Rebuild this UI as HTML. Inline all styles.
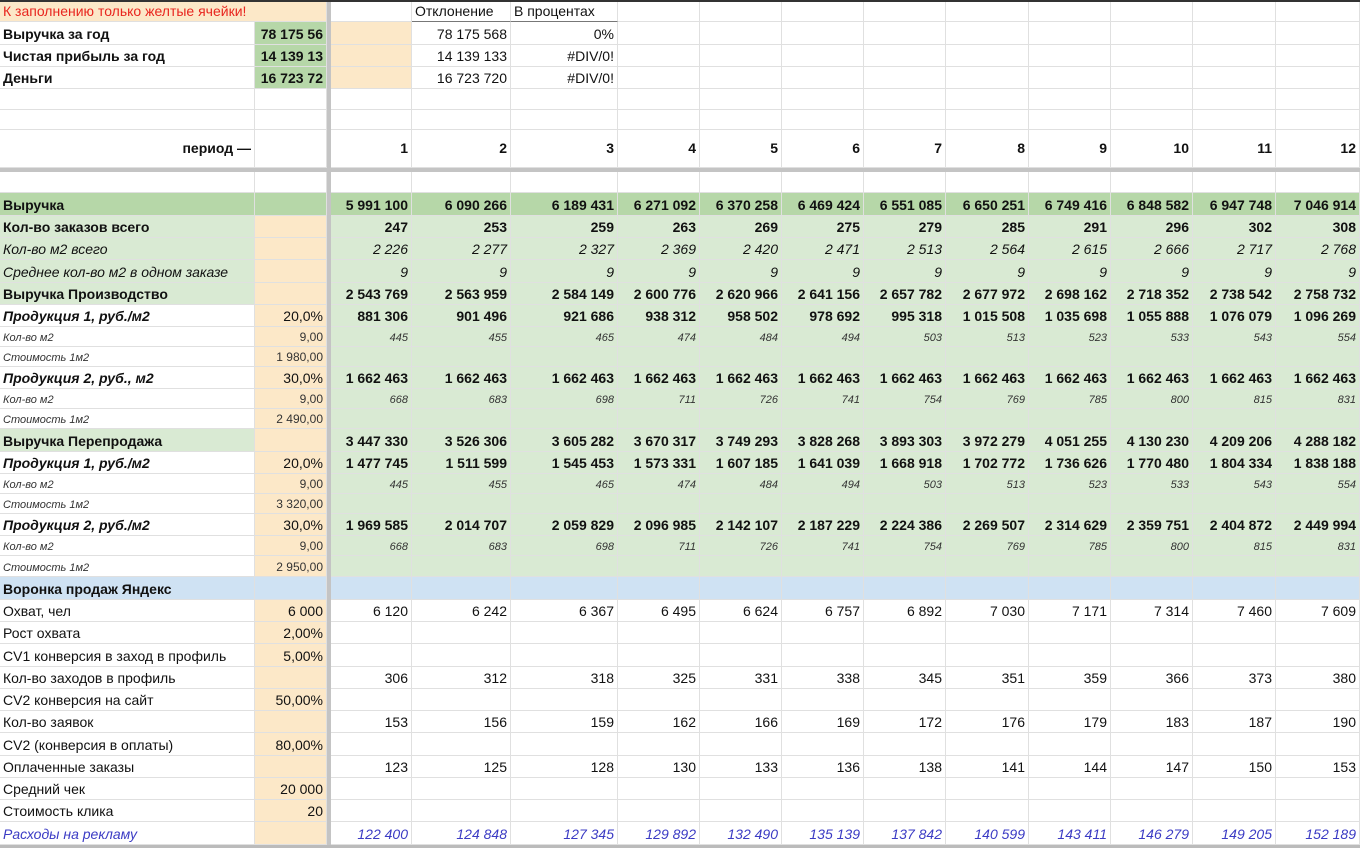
<!DOCTYPE html>
<html><head><meta charset="utf-8"><style>
body{margin:0;width:1360px;height:848px;overflow:hidden;background:#fff;font-family:"Liberation Sans",Arial,sans-serif;font-size:14px;color:#111}
.top{height:2px;background:#333}
.r{display:flex}
.r>span{box-sizing:border-box;border-right:1px solid #e0e0e0;border-bottom:1px solid #e0e0e0;padding:0 3px 2px 3px;white-space:nowrap;overflow:hidden;display:flex;align-items:flex-end;justify-content:flex-end;flex:none}
.r>span:nth-child(1){width:255px;justify-content:flex-start;overflow:visible}
.r>span:nth-child(2){width:72px}
.r>span:nth-child(3){width:4px;background:#c4c4c4;border:none;padding:0}
.r>span:nth-child(4){width:81px}
.r>span:nth-child(5){width:99px}
.r>span:nth-child(6){width:107px}
.r>span:nth-child(7),.r>span:nth-child(8),.r>span:nth-child(9),.r>span:nth-child(10),.r>span:nth-child(12),.r>span:nth-child(13){width:82px}
.r>span:nth-child(11),.r>span:nth-child(14){width:83px}
.r>span:nth-child(15){width:84px}
.y{background:#fce8c8}.g{background:#d9ead3}.G{background:#b6d7a8}.bl{background:#cfe2f3}
.b{font-weight:bold}.i{font-style:italic}.bi{font-weight:bold;font-style:italic}
.s>span{font-size:11px;font-style:italic;color:#333}
.s>span:nth-child(2){font-style:normal;font-size:12px}
.bold>span{font-weight:bold}
.it>span{font-style:italic}
.sep{height:4px;background:#c4c4c4}
.gd>span:nth-child(n+4){background:#d9ead3}
.blue>span{color:#3b3bc4;font-style:italic}
.blue>span:nth-child(2){background:#fce8c8}
</style></head><body>
<div class="top"></div>
<div class="r" style="height:20px"><span class="y" style="color:#e8261f;border-right:none">К заполнению только желтые ячейки!</span><span class="y"></span><span></span><span></span><span style="justify-content:flex-start;border-bottom:1px solid #777">Отклонение</span><span style="justify-content:flex-start;border-bottom:1px solid #777">В процентах</span><span></span><span></span><span></span><span></span><span></span><span></span><span></span><span></span><span></span></div>
<div class="r" style="height:23px"><span class="b">Выручка за год</span><span class="G b">78 175 56</span><span></span><span class="y"></span><span>78 175 568</span><span>0%</span><span></span><span></span><span></span><span></span><span></span><span></span><span></span><span></span><span></span></div>
<div class="r" style="height:22px"><span class="b">Чистая прибыль за год</span><span class="G b">14 139 13</span><span></span><span class="y"></span><span>14 139 133</span><span>#DIV/0!</span><span></span><span></span><span></span><span></span><span></span><span></span><span></span><span></span><span></span></div>
<div class="r" style="height:22px"><span class="b">Деньги</span><span class="G b">16 723 72</span><span></span><span class="y"></span><span>16 723 720</span><span>#DIV/0!</span><span></span><span></span><span></span><span></span><span></span><span></span><span></span><span></span><span></span></div>
<div class="r" style="height:21px"><span></span><span></span><span></span><span></span><span></span><span></span><span></span><span></span><span></span><span></span><span></span><span></span><span></span><span></span><span></span></div>
<div class="r" style="height:20px"><span></span><span></span><span></span><span></span><span></span><span></span><span></span><span></span><span></span><span></span><span></span><span></span><span></span><span></span><span></span></div>
<div class="r bold" style="height:38px"><span style="justify-content:flex-end;align-items:center">период —</span><span></span><span></span><span style="align-items:center">1</span><span style="align-items:center">2</span><span style="align-items:center">3</span><span style="align-items:center">4</span><span style="align-items:center">5</span><span style="align-items:center">6</span><span style="align-items:center">7</span><span style="align-items:center">8</span><span style="align-items:center">9</span><span style="align-items:center">10</span><span style="align-items:center">11</span><span style="align-items:center">12</span></div>
<div class="sep"></div>
<div class="r" style="height:21px"><span></span><span></span><span></span><span></span><span></span><span></span><span></span><span></span><span></span><span></span><span></span><span></span><span></span><span></span><span></span></div>
<div class="r bold" style="height:23px"><span class="G">Выручка</span><span class="G"></span><span></span><span class="G">5 991 100</span><span class="G">6 090 266</span><span class="G">6 189 431</span><span class="G">6 271 092</span><span class="G">6 370 258</span><span class="G">6 469 424</span><span class="G">6 551 085</span><span class="G">6 650 251</span><span class="G">6 749 416</span><span class="G">6 848 582</span><span class="G">6 947 748</span><span class="G">7 046 914</span></div>
<div class="r bold gd" style="height:22px"><span class="g">Кол-во заказов всего</span><span class="y"></span><span></span><span>247</span><span>253</span><span>259</span><span>263</span><span>269</span><span>275</span><span>279</span><span>285</span><span>291</span><span>296</span><span>302</span><span>308</span></div>
<div class="r it gd" style="height:22px"><span class="g">Кол-во м2 всего</span><span class="y"></span><span></span><span>2 226</span><span>2 277</span><span>2 327</span><span>2 369</span><span>2 420</span><span>2 471</span><span>2 513</span><span>2 564</span><span>2 615</span><span>2 666</span><span>2 717</span><span>2 768</span></div>
<div class="r it gd" style="height:23px"><span class="g">Среднее кол-во м2 в одном заказе</span><span class="y"></span><span></span><span>9</span><span>9</span><span>9</span><span>9</span><span>9</span><span>9</span><span>9</span><span>9</span><span>9</span><span>9</span><span>9</span><span>9</span></div>
<div class="r bold gd" style="height:22px"><span class="g">Выручка Производство</span><span class="y"></span><span></span><span>2 543 769</span><span>2 563 959</span><span>2 584 149</span><span>2 600 776</span><span>2 620 966</span><span>2 641 156</span><span>2 657 782</span><span>2 677 972</span><span>2 698 162</span><span>2 718 352</span><span>2 738 542</span><span>2 758 732</span></div>
<div class="r bold gd" style="height:22px"><span class="i">Продукция 1, руб./м2</span><span class="y" style="font-weight:normal">20,0%</span><span></span><span>881 306</span><span>901 496</span><span>921 686</span><span>938 312</span><span>958 502</span><span>978 692</span><span>995 318</span><span>1 015 508</span><span>1 035 698</span><span>1 055 888</span><span>1 076 079</span><span>1 096 269</span></div>
<div class="r s gd" style="height:20px"><span>Кол-во м2</span><span class="y">9,00</span><span></span><span>445</span><span>455</span><span>465</span><span>474</span><span>484</span><span>494</span><span>503</span><span>513</span><span>523</span><span>533</span><span>543</span><span>554</span></div>
<div class="r s gd" style="height:20px"><span>Стоимость 1м2</span><span class="y">1 980,00</span><span></span><span></span><span></span><span></span><span></span><span></span><span></span><span></span><span></span><span></span><span></span><span></span><span></span></div>
<div class="r bold gd" style="height:22px"><span class="i">Продукция 2, руб., м2</span><span class="y" style="font-weight:normal">30,0%</span><span></span><span>1 662 463</span><span>1 662 463</span><span>1 662 463</span><span>1 662 463</span><span>1 662 463</span><span>1 662 463</span><span>1 662 463</span><span>1 662 463</span><span>1 662 463</span><span>1 662 463</span><span>1 662 463</span><span>1 662 463</span></div>
<div class="r s gd" style="height:20px"><span>Кол-во м2</span><span class="y">9,00</span><span></span><span>668</span><span>683</span><span>698</span><span>711</span><span>726</span><span>741</span><span>754</span><span>769</span><span>785</span><span>800</span><span>815</span><span>831</span></div>
<div class="r s gd" style="height:20px"><span>Стоимость 1м2</span><span class="y">2 490,00</span><span></span><span></span><span></span><span></span><span></span><span></span><span></span><span></span><span></span><span></span><span></span><span></span><span></span></div>
<div class="r bold gd" style="height:23px"><span class="g">Выручка Перепродажа</span><span class="y"></span><span></span><span>3 447 330</span><span>3 526 306</span><span>3 605 282</span><span>3 670 317</span><span>3 749 293</span><span>3 828 268</span><span>3 893 303</span><span>3 972 279</span><span>4 051 255</span><span>4 130 230</span><span>4 209 206</span><span>4 288 182</span></div>
<div class="r bold gd" style="height:22px"><span class="i">Продукция 1, руб./м2</span><span class="y" style="font-weight:normal">20,0%</span><span></span><span>1 477 745</span><span>1 511 599</span><span>1 545 453</span><span>1 573 331</span><span>1 607 185</span><span>1 641 039</span><span>1 668 918</span><span>1 702 772</span><span>1 736 626</span><span>1 770 480</span><span>1 804 334</span><span>1 838 188</span></div>
<div class="r s gd" style="height:20px"><span>Кол-во м2</span><span class="y">9,00</span><span></span><span>445</span><span>455</span><span>465</span><span>474</span><span>484</span><span>494</span><span>503</span><span>513</span><span>523</span><span>533</span><span>543</span><span>554</span></div>
<div class="r s gd" style="height:20px"><span>Стоимость 1м2</span><span class="y">3 320,00</span><span></span><span></span><span></span><span></span><span></span><span></span><span></span><span></span><span></span><span></span><span></span><span></span><span></span></div>
<div class="r bold gd" style="height:22px"><span class="i">Продукция 2, руб./м2</span><span class="y" style="font-weight:normal">30,0%</span><span></span><span>1 969 585</span><span>2 014 707</span><span>2 059 829</span><span>2 096 985</span><span>2 142 107</span><span>2 187 229</span><span>2 224 386</span><span>2 269 507</span><span>2 314 629</span><span>2 359 751</span><span>2 404 872</span><span>2 449 994</span></div>
<div class="r s gd" style="height:20px"><span>Кол-во м2</span><span class="y">9,00</span><span></span><span>668</span><span>683</span><span>698</span><span>711</span><span>726</span><span>741</span><span>754</span><span>769</span><span>785</span><span>800</span><span>815</span><span>831</span></div>
<div class="r s gd" style="height:21px"><span>Стоимость 1м2</span><span class="y">2 950,00</span><span></span><span></span><span></span><span></span><span></span><span></span><span></span><span></span><span></span><span></span><span></span><span></span><span></span></div>
<div class="r bold" style="height:23px"><span class="bl">Воронка продаж Яндекс</span><span class="bl"></span><span></span><span class="bl"></span><span class="bl"></span><span class="bl"></span><span class="bl"></span><span class="bl"></span><span class="bl"></span><span class="bl"></span><span class="bl"></span><span class="bl"></span><span class="bl"></span><span class="bl"></span><span class="bl"></span></div>
<div class="r" style="height:22px"><span>Охват, чел</span><span class="y">6 000</span><span></span><span>6 120</span><span>6 242</span><span>6 367</span><span>6 495</span><span>6 624</span><span>6 757</span><span>6 892</span><span>7 030</span><span>7 171</span><span>7 314</span><span>7 460</span><span>7 609</span></div>
<div class="r" style="height:22px"><span>Рост охвата</span><span class="y">2,00%</span><span></span><span></span><span></span><span></span><span></span><span></span><span></span><span></span><span></span><span></span><span></span><span></span><span></span></div>
<div class="r" style="height:23px"><span>CV1 конверсия в заход в профиль</span><span class="y">5,00%</span><span></span><span></span><span></span><span></span><span></span><span></span><span></span><span></span><span></span><span></span><span></span><span></span><span></span></div>
<div class="r" style="height:22px"><span>Кол-во заходов в профиль</span><span class="y"></span><span></span><span>306</span><span>312</span><span>318</span><span>325</span><span>331</span><span>338</span><span>345</span><span>351</span><span>359</span><span>366</span><span>373</span><span>380</span></div>
<div class="r" style="height:22px"><span>CV2 конверсия на сайт</span><span class="y">50,00%</span><span></span><span></span><span></span><span></span><span></span><span></span><span></span><span></span><span></span><span></span><span></span><span></span><span></span></div>
<div class="r" style="height:22px"><span>Кол-во заявок</span><span class="y"></span><span></span><span>153</span><span>156</span><span>159</span><span>162</span><span>166</span><span>169</span><span>172</span><span>176</span><span>179</span><span>183</span><span>187</span><span>190</span></div>
<div class="r" style="height:23px"><span>CV2 (конверсия в оплаты)</span><span class="y">80,00%</span><span></span><span></span><span></span><span></span><span></span><span></span><span></span><span></span><span></span><span></span><span></span><span></span><span></span></div>
<div class="r" style="height:22px"><span>Оплаченные заказы</span><span class="y"></span><span></span><span>123</span><span>125</span><span>128</span><span>130</span><span>133</span><span>136</span><span>138</span><span>141</span><span>144</span><span>147</span><span>150</span><span>153</span></div>
<div class="r" style="height:22px"><span>Средний чек</span><span class="y">20 000</span><span></span><span></span><span></span><span></span><span></span><span></span><span></span><span></span><span></span><span></span><span></span><span></span><span></span></div>
<div class="r" style="height:22px"><span>Стоимость клика</span><span class="y">20</span><span></span><span></span><span></span><span></span><span></span><span></span><span></span><span></span><span></span><span></span><span></span><span></span><span></span></div>
<div class="r blue" style="height:23px"><span>Расходы на рекламу</span><span></span><span></span><span>122 400</span><span>124 848</span><span>127 345</span><span>129 892</span><span>132 490</span><span>135 139</span><span>137 842</span><span>140 599</span><span>143 411</span><span>146 279</span><span>149 205</span><span>152 189</span></div>
<div style="height:3px;background:#bbb"></div>
</body></html>
